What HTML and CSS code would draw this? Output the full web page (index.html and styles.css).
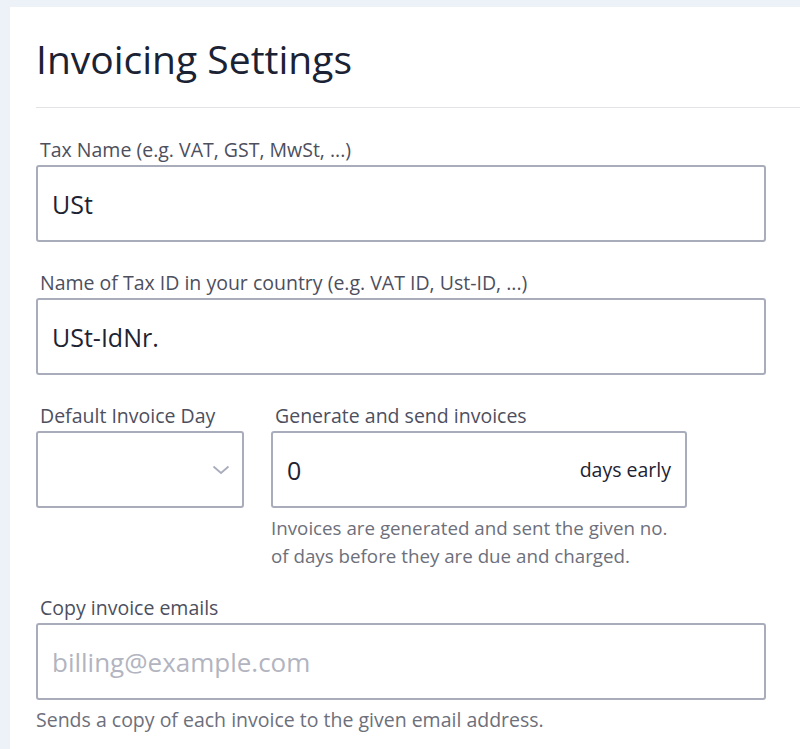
FILE: index.html
```html
<!DOCTYPE html>
<html>
<head>
<meta charset="utf-8">
<link rel="stylesheet" href="styles.css">
</head>
<body>
<div class="card">
  <h1 class="title">Invoicing Settings</h1>
  <div class="divider"></div>
  <form class="form">
    <div class="field">
      <label class="label">Tax Name (e.g. VAT, GST, MwSt, ...)</label>
      <div class="input"><span class="value">USt</span></div>
    </div>
    <div class="field">
      <label class="label">Name of Tax ID in your country (e.g. VAT ID, Ust-ID, ...)</label>
      <div class="input"><span class="value">USt-IdNr.</span></div>
    </div>
    <div class="row">
      <div class="field day">
        <label class="label">Default Invoice Day</label>
        <div class="input select">
          <svg class="chevron" width="18" height="10" viewBox="0 0 18 10"><path d="M1.5 1.5 L9 8 L16.5 1.5" fill="none" stroke="#a9acbd" stroke-width="1.8"/></svg>
        </div>
      </div>
      <div class="field gen">
        <label class="label">Generate and send invoices</label>
        <div class="input addon"><span class="value">0</span><span class="suffix">days early</span></div>
        <p class="help">Invoices are generated and sent the given no.<br>of days before they are due and charged.</p>
      </div>
    </div>
    <div class="field last">
      <label class="label">Copy invoice emails</label>
      <div class="input"><span class="value placeholder">billing@example.com</span></div>
      <p class="help wide">Sends a copy of each invoice to the given email address.</p>
    </div>
  </form>
</div>
</body>
</html>
```

FILE: styles.css
```css
html, body {
  margin: 0;
  padding: 0;
}
body {
  background: #edf1f8;
  font-family: "Open Sans", "Liberation Sans", sans-serif;
  padding: 7px 0 0 10px;
  height: 749px;
  box-sizing: border-box;
  overflow: hidden;
}
.card {
  background: #ffffff;
  padding: 0 0 0 26px;
  height: 742px;
}
.title {
  margin: 0;
  padding-top: 25px;
  font-size: 39px;
  font-weight: 400;
  line-height: 54px;
  color: #1a2234;
}
.divider {
  height: 1px;
  background: #e3e3e6;
  margin-top: 21px;
}
.form {
  width: 730px;
  padding-top: 30px;
  display: flex;
  flex-direction: column;
}
.field {
  display: flex;
  flex-direction: column;
  margin-bottom: 29px;
}
.label {
  font-size: 19.5px;
  line-height: 24px;
  color: #4d4f5e;
  margin: 0 0 3px 4px;
}
.input {
  box-sizing: border-box;
  height: 77px;
  border: 2px solid #a9acbb;
  border-radius: 3px;
  display: flex;
  align-items: center;
  padding: 0 14px;
}
.value {
  font-size: 25px;
  color: #1d2333;
}
.placeholder {
  font-size: 26px;
  color: #b2b4c0;
}
.row {
  display: flex;
  gap: 27px;
}
.day {
  width: 208px;
}
.gen {
  width: 416px;
  margin-bottom: 26px;
}
.select {
  justify-content: flex-end;
  padding-right: 12px;
}
.chevron {
  display: block;
}
.addon {
  justify-content: space-between;
}
.suffix {
  font-size: 19.5px;
  color: #1d2333;
}
.help {
  margin: 6px 0 0 0;
  font-size: 18.75px;
  line-height: 28px;
  color: #6d6f7b;
}
.help.wide {
  font-size: 19.5px;
}
.last {
  margin-bottom: 0;
}
```
